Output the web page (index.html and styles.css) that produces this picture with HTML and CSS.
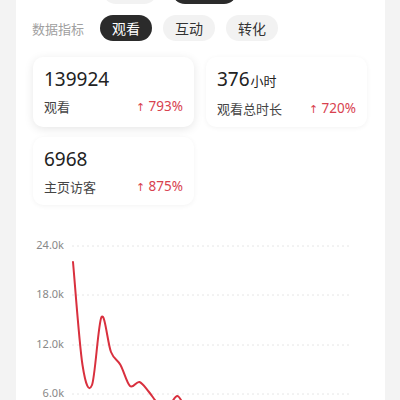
FILE: index.html
```html
<!DOCTYPE html>
<html lang="zh">
<head>
<meta charset="utf-8">
<link rel="stylesheet" href="styles.css">
</head>
<body>
<div class="panel">
  <div class="toprow">
    <span class="tpill light"></span>
    <span class="tpill dark"></span>
  </div>
  <div class="metrics">
    <span class="mlabel">数据指标</span>
    <span class="pill active">观看</span>
    <span class="pill">互动</span>
    <span class="pill">转化</span>
  </div>
  <div class="cards">
    <div class="card selected">
      <div class="num">139924</div>
      <div class="row"><span class="lbl">观看</span><span class="pct"><span class="arrow">↑</span> 793%</span></div>
    </div>
    <div class="card">
      <div class="num">376<span class="unit">小时</span></div>
      <div class="row"><span class="lbl">观看总时长</span><span class="pct"><span class="arrow">↑</span> 720%</span></div>
    </div>
    <div class="card">
      <div class="num">6968</div>
      <div class="row"><span class="lbl">主页访客</span><span class="pct"><span class="arrow">↑</span> 875%</span></div>
    </div>
  </div>
  <svg class="chart" width="369" height="200" viewBox="16 210 369 200">
    <g class="grid">
      <line x1="72" y1="243" x2="352" y2="243"/>
      <line x1="72" y1="292" x2="352" y2="292"/>
      <line x1="72" y1="342" x2="352" y2="342"/>
      <line x1="72" y1="391" x2="352" y2="391"/>
    </g>
    <g class="ylab">
      <text x="64" y="246">24.0k</text>
      <text x="64" y="295">18.0k</text>
      <text x="64" y="345">12.0k</text>
      <text x="64" y="394">6.0k</text>
    </g>
    <path class="line" d="M73 259 C74.6 276.2 79.3 341.5 82.5 362 C85.7 382.5 88.8 390 92 382 C95.2 374 98.3 319.5 101.5 314 C104.7 308.5 107.8 341 111 349 C114.2 357 117.3 356.3 120.5 362 C123.7 367.7 126.8 380.2 130 383 C133.2 385.8 136.3 378 139.5 379 C142.7 380 145.8 385.3 149 389 C152.2 392.7 155.3 398.5 158.5 401 C161.7 403.5 164.8 405.3 168 404 C171.2 402.7 174.3 392.5 177.5 393 C180.7 393.5 183.8 404.7 187 407"/>
  </svg>
</div>
</body>
</html>
```

FILE: styles.css
```css
html, body {
  margin: 0;
  padding: 0;
  background: #f3f3f3;
  overflow: hidden;
  height: 400px;
}
body {
  font-family: "Noto Sans", "Noto Sans CJK SC", sans-serif;
  color: #222;
}
.panel {
  margin: -22px 0 0 16px;
  width: 369px;
  background: #fff;
  padding: 0 18px 0 17px;
  box-sizing: border-box;
}
.toprow {
  display: flex;
  gap: 15px;
  padding-left: 70px;
  height: 26px;
}
.tpill {
  height: 26px;
  border-radius: 13px;
}
.tpill.light { width: 54px; background: #f2f2f2; }
.tpill.dark { width: 65px; background: #2b2b2b; }
.metrics {
  display: flex;
  align-items: center;
  margin-top: 11px;
  margin-left: -1px;
}
.mlabel {
  font-size: 13px;
  color: #a0a0a0;
  margin-right: 16px;
  font-family: "Noto Sans CJK SC", sans-serif;
}
.pill {
  width: 52px;
  height: 26px;
  line-height: 26px;
  border-radius: 13px;
  background: #f2f2f2;
  color: #333;
  font-size: 14px;
  text-align: center;
  margin-right: 11px;
  font-family: "Noto Sans CJK SC", sans-serif;
}
.pill.active {
  background: #2b2b2b;
  color: #fff;
}
.cards {
  display: grid;
  grid-template-columns: 161px 161px;
  column-gap: 12px;
  row-gap: 10px;
  margin-top: 16px;
}
.card {
  background: #fff;
  border-radius: 10px;
  padding: 10px 11px;
  box-shadow: 0 1px 5px rgba(0, 0, 0, 0.05);
}
.card.selected {
  box-shadow: 0 2px 10px rgba(0, 0, 0, 0.1);
}
.num {
  font-size: 19px;
  line-height: 24px;
  color: #222;
}
.unit {
  font-size: 13px;
  font-family: "Noto Sans CJK SC", sans-serif;
  margin-left: 1px;
}
.row {
  display: flex;
  justify-content: space-between;
  align-items: center;
  margin-top: 6px;
  height: 18px;
}
.lbl {
  font-size: 13px;
  color: #444;
  font-family: "Noto Sans CJK SC", sans-serif;
}
.pct {
  font-size: 13.5px;
  color: #d8424f;
}
.arrow {
  font-family: "DejaVu Sans", sans-serif;
  font-size: 11px;
}
.chart {
  display: block;
  margin: 8px 0 0 -17px;
}
.grid line {
  stroke: #e6e6e6;
  stroke-width: 1;
  stroke-dasharray: 2 3;
}
.ylab text {
  font-size: 11px;
  fill: #888;
  text-anchor: end;
  font-family: "Noto Sans", sans-serif;
}
.line {
  fill: none;
  stroke: #d9303e;
  stroke-width: 2;
  stroke-linecap: round;
  stroke-linejoin: round;
}
```
